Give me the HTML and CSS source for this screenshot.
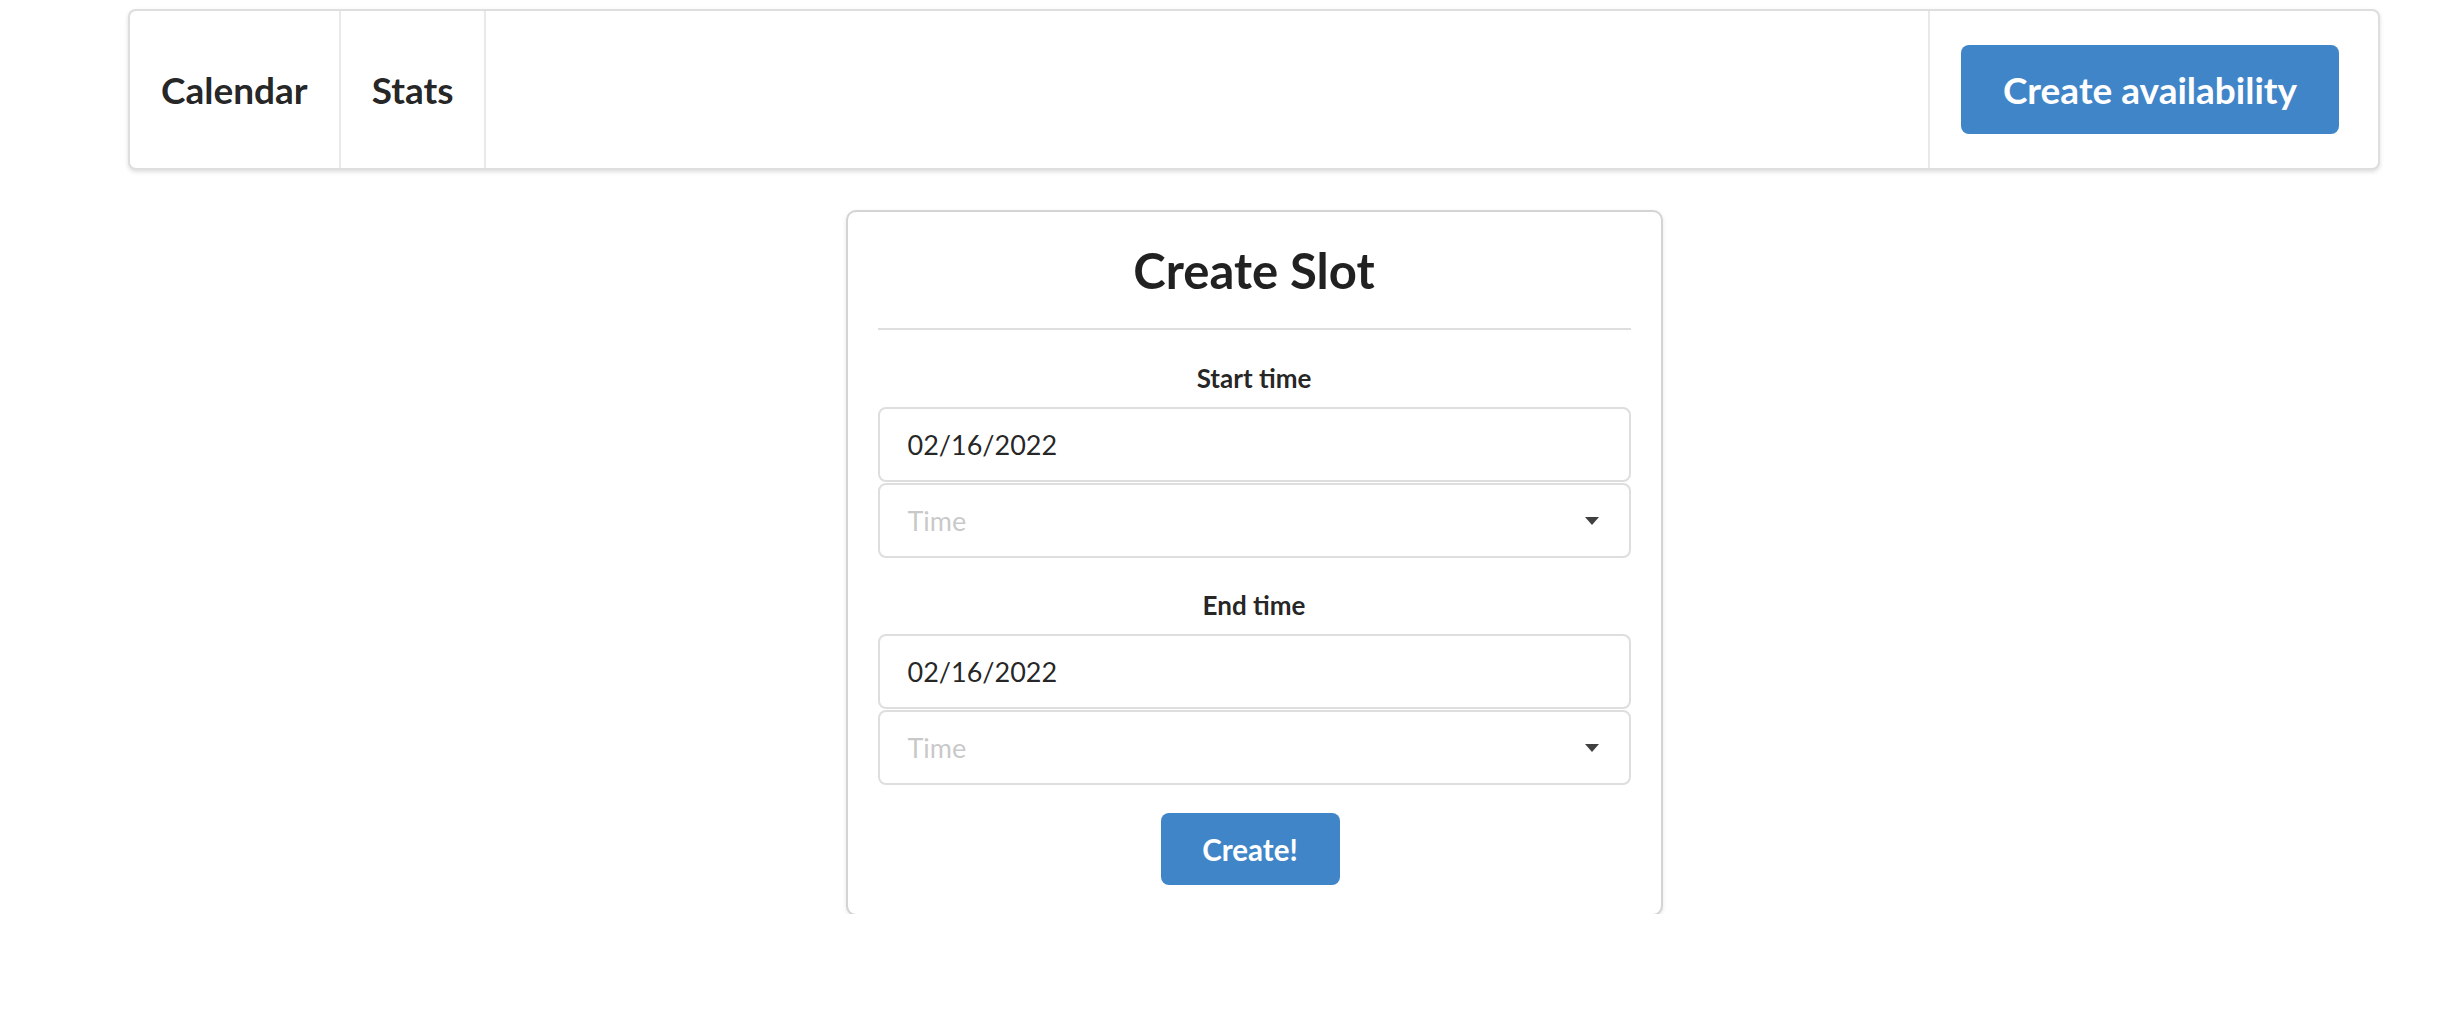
FILE: index.html
```html
<!DOCTYPE html>
<html lang="en">
<head>
<meta charset="utf-8">
<title>Create Slot</title>
<link rel="stylesheet" href="styles.css">
</head>
<body>
<div class="page">
  <nav class="menu">
    <a class="item">Calendar</a>
    <a class="item">Stats</a>
    <div class="item right">
      <button class="btn btn-large">Create availability</button>
    </div>
  </nav>
  <div class="center">
    <div class="card">
      <h2 class="title">Create Slot</h2>
      <div class="divider"></div>
      <div class="field">
        <label class="label">Start time</label>
        <div class="input">02/16/2022</div>
        <div class="select"><span class="placeholder">Time</span><span class="caret"></span></div>
      </div>
      <div class="field last">
        <label class="label">End time</label>
        <div class="input">02/16/2022</div>
        <div class="select"><span class="placeholder">Time</span><span class="caret"></span></div>
      </div>
      <div class="actions">
        <button class="btn btn-small">Create!</button>
      </div>
    </div>
  </div>
</div>
</body>
</html>
```

FILE: styles.css
```css
html, body {
  margin: 0;
  padding: 0;
  background: #ffffff;
}
body {
  font-family: Lato, "Open Sans", "Liberation Sans", sans-serif;
  color: rgba(0, 0, 0, 0.87);
}
.page {
  padding: 9px 62px 0 128px;
}
.menu {
  display: flex;
  height: 161px;
  box-sizing: border-box;
  border: 2px solid rgba(34, 36, 38, 0.15);
  border-radius: 8px;
  box-shadow: 0 2px 4px 0 rgba(34, 36, 38, 0.15);
  background: #fff;
}
.item {
  display: flex;
  align-items: center;
  padding: 0 31px;
  font-size: 37px;
  font-weight: 700;
  border-right: 2px solid rgba(34, 36, 38, 0.1);
  color: rgba(0, 0, 0, 0.87);
}
.item.right {
  margin-left: auto;
  border-right: none;
  border-left: 2px solid rgba(34, 36, 38, 0.1);
  padding: 0 39px 0 31px;
}
.btn {
  font-family: Lato, "Open Sans", "Liberation Sans", sans-serif;
  font-weight: 700;
  color: #fff;
  background: #4185c9;
  border: none;
  border-radius: 8px;
  cursor: pointer;
}
.btn-large {
  width: 378px;
  height: 89px;
  font-size: 37px;
}
.btn-small {
  width: 179px;
  height: 72px;
  font-size: 29.5px;
  margin-right: 8px;
}
.center {
  display: flex;
  justify-content: center;
  padding-top: 42px;
}
.card {
  width: 813px;
  box-sizing: border-box;
  padding: 27px 30px 29px;
  border-radius: 8px;
  box-shadow: 0 2px 6px 0 #d4d4d5, 0 0 0 2px #d4d4d5;
}
.title {
  margin: 0;
  text-align: center;
  font-size: 49px;
  font-weight: 700;
  line-height: 62px;
}
.divider {
  margin: 27px 0 31px;
  border-top: 2px solid rgba(34, 36, 38, 0.15);
}
.field {
  margin-bottom: 30px;
}
.field.last {
  margin-bottom: 28px;
}
.label {
  display: block;
  text-align: center;
  font-size: 26px;
  font-weight: 700;
  line-height: 34px;
  margin-bottom: 12px;
}
.input, .select {
  box-sizing: border-box;
  height: 75px;
  display: flex;
  align-items: center;
  padding: 0 28px 0 28px;
  border: 2px solid rgba(34, 36, 38, 0.15);
  border-radius: 8px;
  font-size: 27px;
}
.select {
  margin-top: 1px;
  justify-content: space-between;
}
.placeholder {
  color: rgba(191, 191, 191, 0.87);
}
.caret {
  width: 0;
  height: 0;
  border-left: 7px solid transparent;
  border-right: 7px solid transparent;
  border-top: 8px solid rgba(0, 0, 0, 0.75);
  margin-right: 2px;
}
.actions {
  display: flex;
  justify-content: center;
}
```
